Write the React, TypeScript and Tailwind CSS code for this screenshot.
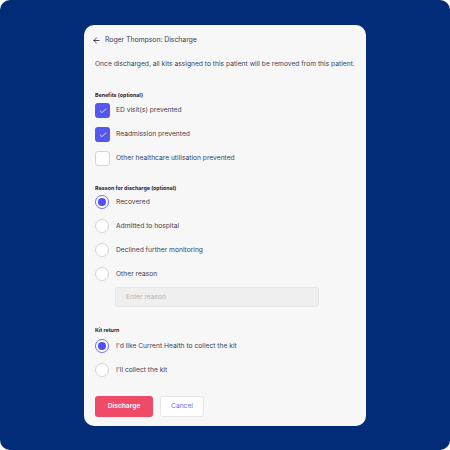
import { ArrowLeft, Check } from 'lucide-react';

const BENEFITS = [
  { text: 'ED visit(s) prevented', checked: true },
  { text: 'Readmission prevented', checked: true },
  { text: 'Other healthcare utilisation prevented', checked: false },
];

const REASONS = [
  { text: 'Recovered', checked: true },
  { text: 'Admitted to hospital', checked: false },
  { text: 'Declined further monitoring', checked: false },
  { text: 'Other reason', checked: false },
];

const KIT = [
  { text: "I'd like Current Health to collect the kit", checked: true },
  { text: "I'll collect the kit", checked: false },
];

function Box({ checked }: { checked: boolean }) {
  return checked ? (
    <div className="w-[15px] h-[15px] rounded-[3px] bg-[#5558f0] flex items-center justify-center shrink-0">
      <Check className="w-[8px] h-[8px] text-white" strokeWidth={2.5} />
    </div>
  ) : (
    <div className="w-[15px] h-[15px] rounded-[3px] border border-[#d4d4d8] bg-white shrink-0" />
  );
}

function Radio({ checked }: { checked: boolean }) {
  return checked ? (
    <div className="w-[14px] h-[14px] rounded-full border border-[#6d70f2] bg-white flex items-center justify-center shrink-0">
      <div className="w-[8px] h-[8px] rounded-full bg-[#4f52ee]" />
    </div>
  ) : (
    <div className="w-[14px] h-[14px] rounded-full border border-[#d4d4d8] bg-white shrink-0" />
  );
}

export default function App() {
  return (
    <div
      className="w-[450px] h-[450px] bg-[#022b78] rounded-[10px] flex justify-center pt-[25px] text-[#3b3f55]"
      style={{ fontFamily: 'Inter, "Noto Sans", sans-serif' }}
    >
      <div className="w-[282px] h-[401px] bg-[#f7f7f7] rounded-[10px] px-[11px]">
        {/* Header */}
        <div className="flex items-center gap-[4px] mt-[10px] h-[10px] -ml-[3px]">
          <ArrowLeft className="w-[9px] h-[9px] text-[#3b3f55]" strokeWidth={2.5} />
          <span className="text-[7px] tracking-[-0.1px]">Roger Thompson: Discharge</span>
        </div>
        <p className="text-[6.7px] mt-[14px] leading-[10px] whitespace-nowrap">
          Once discharged, all kits assigned to this patient will be removed from this patient.
        </p>

        {/* Benefits */}
        <p className="text-[5.3px] font-bold mt-[23px] leading-[6px] text-[#1f2233]">Benefits (optional)</p>
        <div className="flex flex-col gap-[9px] mt-[5px]">
          {BENEFITS.map((b, i) => (
            <div key={i} className="flex items-center gap-[6px] h-[15px]">
              <Box checked={b.checked} />
              <span className="text-[6.7px]">{b.text}</span>
            </div>
          ))}
        </div>

        {/* Reason */}
        <p className="text-[5.3px] font-bold mt-[19px] leading-[6px] text-[#1f2233]">Reason for discharge (optional)</p>
        <div className="flex flex-col gap-[10px] mt-[4px]">
          {REASONS.map((r, i) => (
            <div key={i} className="flex items-center gap-[7px] h-[14px]">
              <Radio checked={r.checked} />
              <span className="text-[6.7px]">{r.text}</span>
            </div>
          ))}
        </div>
        <div className="ml-[20px] mt-[6px] w-[204px] h-[20px] rounded-[3px] bg-[#efefef] border border-[#e6e6e6] flex items-center px-[10px]">
          <span className="text-[6.7px] text-[#b3b3b8]">Enter reason</span>
        </div>

        {/* Kit return */}
        <p className="text-[5.3px] font-bold mt-[20px] leading-[6px] text-[#1f2233]">Kit return</p>
        <div className="flex flex-col gap-[10px] mt-[6px]">
          {KIT.map((k, i) => (
            <div key={i} className="flex items-center gap-[7px] h-[14px]">
              <Radio checked={k.checked} />
              <span className="text-[6.7px]">{k.text}</span>
            </div>
          ))}
        </div>

        {/* Actions */}
        <div className="flex gap-[7px] mt-[19px]">
          <button className="w-[58px] h-[21px] rounded-[3px] bg-[#ef4a68] text-white text-[6.7px] font-semibold">
            Discharge
          </button>
          <button className="w-[44px] h-[21px] rounded-[3px] bg-white border border-[#e6e6e6] text-[#6b6ef0] text-[6.7px]">
            Cancel
          </button>
        </div>
      </div>
    </div>
  );
}
